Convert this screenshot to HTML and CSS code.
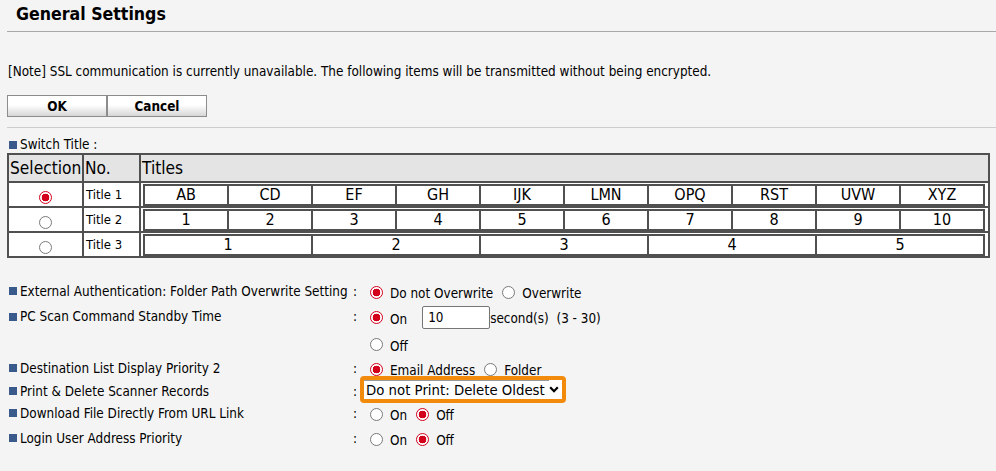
FILE: index.html
```html
<!DOCTYPE html>
<html lang="en">
<head>
<meta charset="utf-8">
<title>General Settings</title>
<link rel="stylesheet" href="styles.css">
</head>
<body>
<div class="page">
  <h1 class="title">General Settings</h1>
  <hr class="rule-dark">
  <p class="note">[Note] SSL communication is currently unavailable. The following items will be transmitted without being encrypted.</p>
  <div class="buttons">
    <button class="btn" type="button">OK</button><button class="btn" type="button">Cancel</button>
  </div>
  <hr class="rule-light">
  <div class="section-label"><span class="bullet"></span>Switch Title :</div>
  <table class="titles">
    <colgroup><col class="col-sel"><col class="col-no"><col class="col-titles"></colgroup>
    <thead>
      <tr><th>Selection</th><th>No.</th><th>Titles</th></tr>
    </thead>
    <tbody>
      <tr>
        <td class="sel"><span class="radio checked"></span></td>
        <td class="no">Title 1</td>
        <td class="inner-wrap">
          <table class="inner">
            <tr><td>AB</td><td>CD</td><td>EF</td><td>GH</td><td>IJK</td><td>LMN</td><td>OPQ</td><td>RST</td><td>UVW</td><td>XYZ</td></tr>
          </table>
        </td>
      </tr>
      <tr>
        <td class="sel"><span class="radio"></span></td>
        <td class="no">Title 2</td>
        <td class="inner-wrap">
          <table class="inner">
            <tr><td>1</td><td>2</td><td>3</td><td>4</td><td>5</td><td>6</td><td>7</td><td>8</td><td>9</td><td>10</td></tr>
          </table>
        </td>
      </tr>
      <tr>
        <td class="sel"><span class="radio"></span></td>
        <td class="no">Title 3</td>
        <td class="inner-wrap">
          <table class="inner">
            <tr><td>1</td><td>2</td><td>3</td><td>4</td><td>5</td></tr>
          </table>
        </td>
      </tr>
    </tbody>
  </table>

  <div class="settings">
    <div class="row r1">
      <div class="label"><span class="bullet"></span>External Authentication: Folder Path Overwrite Setting</div>
      <div class="colon">:</div>
      <div class="value"><span class="radio checked"></span><span class="opt">Do not Overwrite</span><span class="radio"></span><span class="opt">Overwrite</span></div>
    </div>
    <div class="row r2">
      <div class="label"><span class="bullet"></span>PC Scan Command Standby Time</div>
      <div class="colon">:</div>
      <div class="value"><span class="radio checked"></span><span class="opt opt-on">On</span><input class="num" type="text" value="10"><span class="unit">second(s)&nbsp;&nbsp;(3 - 30)</span></div>
    </div>
    <div class="row r3">
      <div class="label"></div>
      <div class="colon"></div>
      <div class="value"><span class="radio"></span><span class="opt">Off</span></div>
    </div>
    <div class="row r4">
      <div class="label"><span class="bullet"></span>Destination List Display Priority 2</div>
      <div class="colon">:</div>
      <div class="value"><span class="radio checked"></span><span class="opt">Email Address</span><span class="radio"></span><span class="opt">Folder</span></div>
    </div>
    <div class="row r5">
      <div class="label"><span class="bullet"></span>Print &amp; Delete Scanner Records</div>
      <div class="colon">:</div>
      <div class="value value-select">
        <span class="select-wrap">
          <select class="select"><option>Do not Print: Delete Oldest</option></select>
          <svg class="chev" width="10" height="7" viewBox="0 0 10 7"><polyline points="1.2,1.2 5,5.2 8.8,1.2" fill="none" stroke="#000" stroke-width="2.2"/></svg>
        </span>
      </div>
    </div>
    <div class="row r6">
      <div class="label"><span class="bullet"></span>Download File Directly From URL Link</div>
      <div class="colon">:</div>
      <div class="value"><span class="radio"></span><span class="opt">On</span><span class="radio checked"></span><span class="opt">Off</span></div>
    </div>
    <div class="row r7">
      <div class="label"><span class="bullet"></span>Login User Address Priority</div>
      <div class="colon">:</div>
      <div class="value"><span class="radio"></span><span class="opt">On</span><span class="radio checked"></span><span class="opt">Off</span></div>
    </div>
  </div>
</div>
</body>
</html>
```

FILE: styles.css
```css
* { box-sizing: border-box; }

body {
  margin: 0;
  background: #f4f4f4;
  font-family: "DejaVu Sans Condensed", "DejaVu Sans", sans-serif;
  color: #000;
}

.page {
  padding: 0 0 0 7px;
}

.title {
  margin: 0;
  height: 31px;
  padding: 3px 0 0 9px;
  font-size: 17.6px;
  font-weight: bold;
  line-height: 22px;
}

.rule-dark {
  margin: 0;
  border: 0;
  border-top: 1px solid #a9a9a9;
  height: 0;
}

.rule-light {
  margin: 10px 0 0;
  border: 0;
  border-top: 1px solid #cdcdcd;
  height: 0;
}

.note {
  margin: 32px 0 0 1px;
  font-size: 13.4px;
  line-height: 16px;
}

.buttons {
  margin-top: 15px;
  display: flex;
}

.btn {
  width: 100px;
  height: 22px;
  margin: 0;
  padding: 0;
  border: 1px solid #8c8c8c;
  background: linear-gradient(#ffffff 0%, #ffffff 45%, #d6d6d6 100%);
  font-family: "DejaVu Sans Condensed", "DejaVu Sans", sans-serif;
  font-size: 13.4px;
  font-weight: bold;
  color: #000;
}

.section-label {
  margin: 9px 0 0 2px;
  font-size: 13.4px;
  line-height: 16px;
  display: flex;
  align-items: center;
}

.bullet {
  display: inline-block;
  width: 8px;
  height: 8px;
  background: #3a5a8c;
  margin-right: 3px;
  flex: none;
}

/* Titles table */
.titles {
  width: 983px;
  table-layout: fixed;
  border-collapse: separate;
  border-spacing: 0;
  border: 1px solid #505050;
}

.col-sel { width: 75px; }
.col-no { width: 57px; }

.titles th {
  height: 28px;
  padding: 0 0 0 1px;
  border: 1px solid #505050;
  background: #e4e4e4;
  text-align: left;
  font-weight: normal;
  font-size: 17.2px;
  white-space: nowrap;
  overflow: hidden;
}

.titles > tbody > tr > td {
  height: 25px;
  border: 1px solid #505050;
  background: #fff;
}

.titles td.sel {
  text-align: center;
  padding: 3px 0 0;
}

.titles td.no {
  padding: 0 0 0 2px;
  font-size: 13px;
}

.titles td.inner-wrap {
  padding: 1px 3px 0 2px;
}

.inner {
  width: 100%;
  table-layout: fixed;
  border-collapse: separate;
  border-spacing: 0;
  border: 1px solid #505050;
}

.inner td {
  height: 20px;
  padding: 0;
  border: 1px solid #505050;
  background: #fff;
  text-align: center;
  font-size: 16px;
  line-height: 18px;
}

/* Radios */
.radio {
  display: inline-block;
  width: 13px;
  height: 13px;
  border-radius: 50%;
  border: 1px solid #7a7a7a;
  background: #fff;
  flex: none;
  vertical-align: middle;
}

.radio.checked {
  border: 1.5px solid #d3001b;
  background: radial-gradient(circle, #d3001b 0 3.6px, #fff 4.1px);
}

/* Settings */
.settings {
  margin-top: 21px;
}

.row {
  display: grid;
  grid-template-columns: 343px 20px 1fr;
  align-items: center;
  font-size: 13.4px;
}

.r1 { height: 24px; }
.r2 { height: 27px; }
.r3 { height: 27px; }
.r4 { height: 22px; }
.r5 { height: 24px; }
.r6 { height: 20px; }
.r7 { height: 30px; }

.label {
  display: flex;
  align-items: center;
  padding-left: 2px;
  white-space: nowrap;
}

.colon {
  padding-left: 3px;
}

.value {
  display: flex;
  align-items: center;
  padding-top: 2px;
  white-space: nowrap;
}

.value-select {
  padding-top: 0;
}

.opt {
  margin-left: 7px;
  margin-right: 9px;
  padding-top: 3px;
}

.opt-on {
  margin-right: 15px;
}

.num {
  width: 68px;
  height: 23px;
  margin: 0;
  padding: 0 0 0 5px;
  border: 1px solid #767676;
  border-radius: 2px;
  background: #fff;
  font-family: "DejaVu Sans Condensed", "DejaVu Sans", sans-serif;
  font-size: 13.4px;
  color: #000;
}

.unit {
  padding-top: 1px;
}

.select-wrap {
  display: inline-flex;
  align-items: center;
  margin-left: -10px;
  margin-top: -3px;
  height: 27px;
  width: 206px;
  border: 4px solid #f28a0c;
  border-radius: 4px;
  background: #fff;
  padding-right: 3px;
}

.select {
  appearance: none;
  -webkit-appearance: none;
  flex: 1;
  min-width: 0;
  height: 19px;
  margin: 0;
  padding: 0 0 0 2px;
  border: 0;
  border-top: 1px solid #9a9a9a;
  background: #fff;
  font-family: "DejaVu Sans", sans-serif;
  font-size: 13.3px;
  color: #000;
}

.chev {
  flex: none;
}
```
